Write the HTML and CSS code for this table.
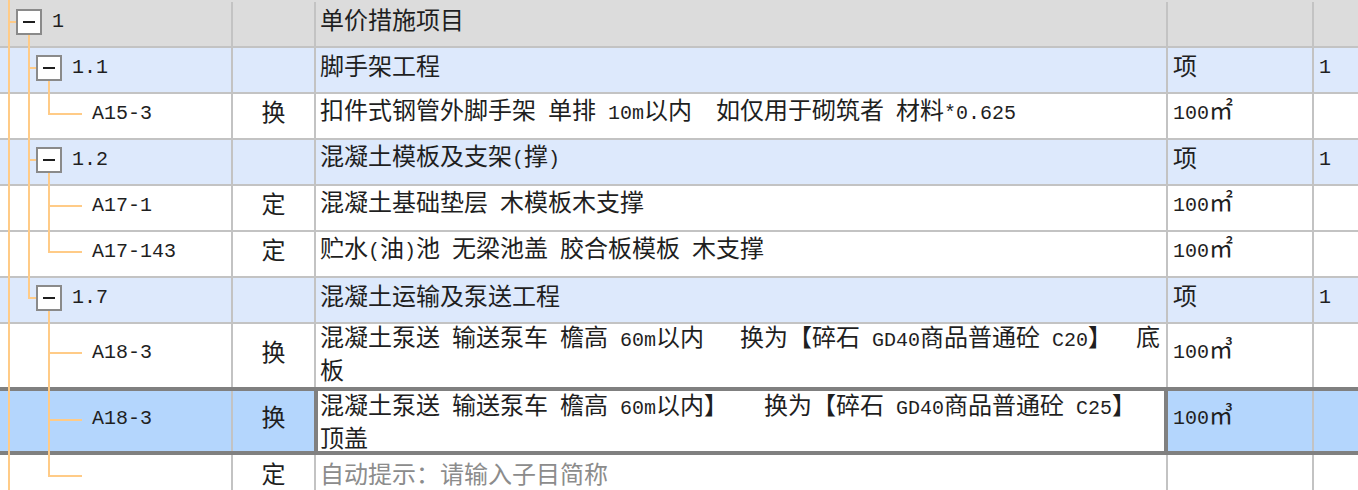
FILE: index.html
```html
<!DOCTYPE html>
<html lang="zh-CN">
<head>
<meta charset="utf-8">
<title>单价措施项目</title>
<link rel="stylesheet" href="styles.css">
</head>
<body>
<div class="grid">
  <svg class="tree-lines" width="233" height="490" viewBox="0 0 233 490" aria-hidden="true">
    <g fill="#ffcb87">
      <rect x="8" y="0" width="2" height="490"/>
      <rect x="10" y="21" width="6" height="2"/>
      <rect x="28" y="35" width="2" height="264"/>
      <rect x="30" y="67" width="6" height="2"/>
      <rect x="30" y="159" width="6" height="2"/>
      <rect x="30" y="297" width="6" height="2"/>
      <rect x="48" y="81" width="2" height="34"/>
      <rect x="50" y="113" width="32" height="2"/>
      <rect x="48" y="173" width="2" height="80"/>
      <rect x="50" y="205" width="32" height="2"/>
      <rect x="50" y="251" width="32" height="2"/>
      <rect x="48" y="311" width="2" height="166"/>
      <rect x="50" y="352" width="32" height="2"/>
      <rect x="50" y="419" width="32" height="2"/>
      <rect x="50" y="475" width="32" height="2"/>
    </g>
  </svg>

  <div class="row r-root">
    <div class="c tree lv0"><span class="box"></span><span class="t"><span class="en">1</span></span></div>
    <div class="c type"></div>
    <div class="c name"><span class="t">单价措施项目</span></div>
    <div class="c unit"></div>
    <div class="c qty"></div>
  </div>

  <div class="row r-grp">
    <div class="c tree lv1"><span class="box"></span><span class="t"><span class="en">1.1</span></span></div>
    <div class="c type"></div>
    <div class="c name"><span class="t">脚手架工程</span></div>
    <div class="c unit"><span class="t">项</span></div>
    <div class="c qty"><span class="t"><span class="en">1</span></span></div>
  </div>

  <div class="row">
    <div class="c tree lv2"><span class="leaf"></span><span class="t"><span class="en">A15-3</span></span></div>
    <div class="c type"><span class="t">换</span></div>
    <div class="c name"><span class="t">扣件式钢管外脚手架<span class="en"> </span>单排<span class="en"> 10m</span>以内<span class="en">  </span>如仅用于砌筑者<span class="en"> </span>材料<span class="en">*0.625</span></span></div>
    <div class="c unit"><span class="t"><span class="en">100</span>㎡</span></div>
    <div class="c qty"></div>
  </div>

  <div class="row r-grp">
    <div class="c tree lv1"><span class="box"></span><span class="t"><span class="en">1.2</span></span></div>
    <div class="c type"></div>
    <div class="c name"><span class="t">混凝土模板及支架<span class="en">(</span>撑<span class="en">)</span></span></div>
    <div class="c unit"><span class="t">项</span></div>
    <div class="c qty"><span class="t"><span class="en">1</span></span></div>
  </div>

  <div class="row">
    <div class="c tree lv2"><span class="leaf"></span><span class="t"><span class="en">A17-1</span></span></div>
    <div class="c type"><span class="t">定</span></div>
    <div class="c name"><span class="t">混凝土基础垫层<span class="en"> </span>木模板木支撑</span></div>
    <div class="c unit"><span class="t"><span class="en">100</span>㎡</span></div>
    <div class="c qty"></div>
  </div>

  <div class="row">
    <div class="c tree lv2"><span class="leaf"></span><span class="t"><span class="en">A17-143</span></span></div>
    <div class="c type"><span class="t">定</span></div>
    <div class="c name"><span class="t">贮水<span class="en">(</span>油<span class="en">)</span>池<span class="en"> </span>无梁池盖<span class="en"> </span>胶合板模板<span class="en"> </span>木支撑</span></div>
    <div class="c unit"><span class="t"><span class="en">100</span>㎡</span></div>
    <div class="c qty"></div>
  </div>

  <div class="row r-grp">
    <div class="c tree lv1"><span class="box"></span><span class="t"><span class="en">1.7</span></span></div>
    <div class="c type"></div>
    <div class="c name"><span class="t">混凝土运输及泵送工程</span></div>
    <div class="c unit"><span class="t">项</span></div>
    <div class="c qty"><span class="t"><span class="en">1</span></span></div>
  </div>

  <div class="row r-tall">
    <div class="c tree lv2"><span class="leaf"></span><span class="t"><span class="en">A18-3</span></span></div>
    <div class="c type"><span class="t">换</span></div>
    <div class="c name multi"><span class="wrap">混凝土泵送<span class="en"> </span>输送泵车<span class="en"> </span>檐高<span class="en"> 60m</span>以内<span class="en">   </span>换为【碎石<span class="en"> GD40</span>商品普通砼<span class="en"> C20</span>】<span class="en">  </span>底板</span></div>
    <div class="c unit"><span class="t"><span class="en">100</span>㎥</span></div>
    <div class="c qty"></div>
  </div>

  <div class="row r-sel">
    <div class="c tree lv2"><span class="leaf"></span><span class="t"><span class="en">A18-3</span></span></div>
    <div class="c type"><span class="t">换</span></div>
    <div class="c name multi focus"><span class="wrap">混凝土泵送<span class="en"> </span>输送泵车<span class="en"> </span>檐高<span class="en"> 60m</span>以内】<span class="en">   </span>换为【碎石<span class="en"> GD40</span>商品普通砼<span class="en"> C25</span>】<span class="en"> </span>顶盖</span></div>
    <div class="c unit"><span class="t"><span class="en">100</span>㎥</span></div>
    <div class="c qty"></div>
  </div>

  <div class="row r-last">
    <div class="c tree lv2"><span class="leaf"></span></div>
    <div class="c type"><span class="t">定</span></div>
    <div class="c name"><span class="t hint">自动提示：请输入子目简称</span></div>
    <div class="c unit"></div>
    <div class="c qty"></div>
  </div>
</div>
</body>
</html>
```

FILE: styles.css
```css
* {
  box-sizing: border-box;
  margin: 0;
  padding: 0;
}

html, body {
  background: #ffffff;
}

body {
  width: 1358px;
  height: 490px;
  overflow: hidden;
  font-family: "Noto Sans CJK SC", "Noto Sans CJK JP", sans-serif;
  font-size: 24px;
  line-height: 28px;
  color: #1f1f1f;
}

.grid {
  position: relative;
  width: 1358px;
}

.tree-lines {
  position: absolute;
  left: 0;
  top: 0;
  z-index: 2;
  pointer-events: none;
}

.row {
  display: grid;
  grid-template-columns: 233px 83px 852px 146px 44px;
  grid-template-rows: 100%;
  height: 46px;
  border-bottom: 2px solid #c3c3c3;
}

.r-root {
  height: 48px;
  padding-top: 2px;
  background: #dcdcdc;
}

.r-grp {
  background: #dde9fc;
}

.r-tall {
  height: 63px;
  border-bottom: none;
}

.r-sel {
  height: 68px;
  border-top: 4px solid #808080;
  border-bottom: 4px solid #808080;
  background: #b4d6fd;
}

.r-last {
  height: 46px;
  border-bottom: none;
}

.c {
  display: flex;
  align-items: center;
  min-width: 0;
  min-height: 0;
  padding-bottom: 4px;
  border-right: 2px solid #c3c3c3;
  white-space: pre;
}

.c:last-child {
  border-right: none;
}

.t {
  padding-bottom: 6px;
}

.en {
  font-family: "Liberation Mono", "DejaVu Sans Mono", monospace;
  font-size: 20px;
}

.tree {
  gap: 10px;
}

.lv0 { padding-left: 16px; }
.lv1 { padding-left: 36px; }
.lv2 { padding-left: 56px; }

.box {
  flex: none;
  width: 26px;
  height: 26px;
  border: 2px solid #8a8a8a;
  background: #ffffff;
  display: flex;
  align-items: center;
  justify-content: center;
}

.box::before {
  content: "";
  width: 12px;
  height: 2px;
  background: #1f1f1f;
}

.leaf {
  flex: none;
  width: 26px;
  height: 26px;
}

.type {
  justify-content: center;
}

.name {
  padding-left: 4px;
}

.multi {
  padding-bottom: 6px;
}

.r-sel .multi {
  padding-bottom: 2px;
}

.wrap {
  display: block;
  width: 100%;
  white-space: pre-wrap;
  line-height: 28px;
}

.focus {
  background: #ffffff;
  border-right-color: #808080;
  box-shadow: inset 2px 0 0 #808080, inset -2px 0 0 #808080;
}

.r-sel .type {
  border-right-color: #808080;
}

.unit {
  padding-left: 5px;
}

.qty {
  padding-left: 5px;
}

.hint {
  color: #8c8c8c;
}
```
